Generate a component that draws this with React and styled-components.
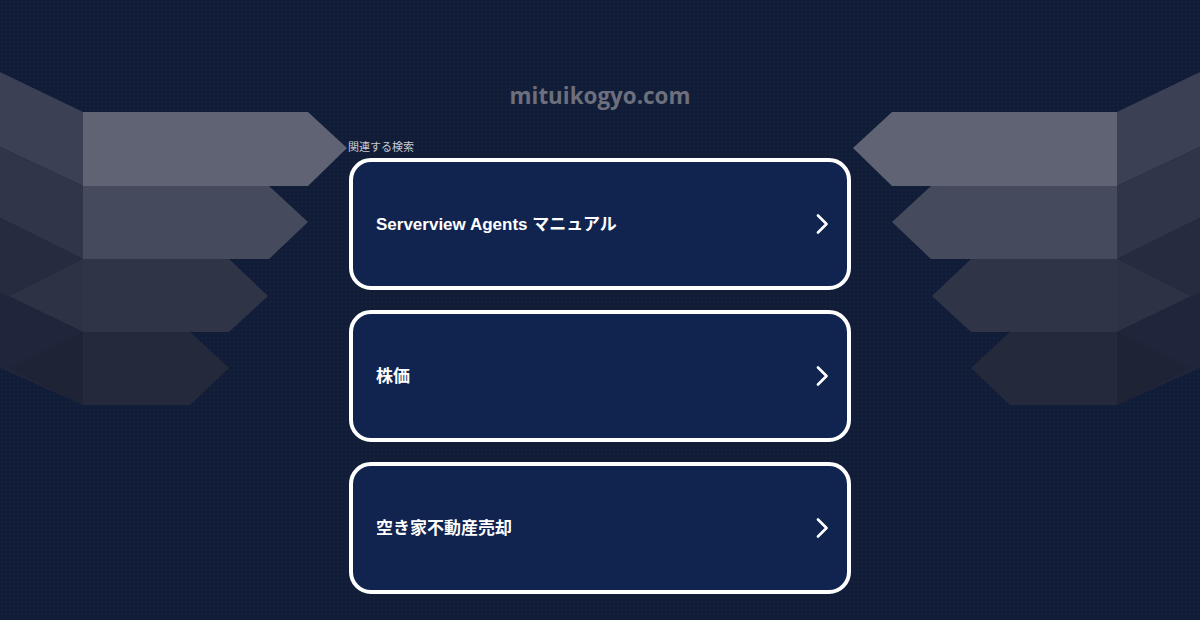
import styled, { createGlobalStyle } from "styled-components";

const GlobalStyle = createGlobalStyle`
  html, body {
    margin: 0;
    padding: 0;
    background: #111c37;
  }
  * {
    box-sizing: border-box;
  }
`;

const Page = styled.div`
  width: 100%;
  height: 620px;
  overflow: hidden;
  display: grid;
  grid-template-columns: 1fr 502px 1fr;
  background-color: #111c37;
  background-image: radial-gradient(rgba(40, 60, 110, 0.25) 0.6px, transparent 0.8px);
  background-size: 4px 4px;
  font-family: "Liberation Sans", "Noto Sans CJK JP", sans-serif;
`;

const Side = styled.div`
  height: 620px;
  svg {
    display: block;
    width: 100%;
    height: 100%;
    transform: ${(p) => (p.$flip ? "scaleX(-1)" : "none")};
  }
`;

const Center = styled.main`
  display: flex;
  flex-direction: column;
  padding-top: 80px;
`;

const Domain = styled.h1`
  margin: 0;
  text-align: center;
  font-family: "Open Sans", "Noto Sans", sans-serif;
  font-weight: 700;
  font-size: 22.4px;
  line-height: 32px;
  color: #6d707c;
`;

const Related = styled.div`
  margin-top: 26px;
  margin-left: -1px;
  font-family: "Noto Sans CJK JP", sans-serif;
  font-size: 11px;
  line-height: 16px;
  color: #c9cbd2;
`;

const List = styled.div`
  display: flex;
  flex-direction: column;
  gap: 20px;
  margin-top: 4px;
`;

const Card = styled.a`
  display: flex;
  align-items: center;
  justify-content: space-between;
  height: 132px;
  padding: 0 19px 0 23px;
  border: 4px solid #ffffff;
  border-radius: 22px;
  background: #10244f;
  color: #ffffff;
  text-decoration: none;
  font-weight: 700;
  font-size: 17px;
  cursor: pointer;
`;

const Label = styled.span`
  line-height: 20px;
  padding-top: 1px;
`;

const Chevron = () => (
  <svg width="12" height="20" viewBox="0 0 12 20">
    <polyline
      points="2,1.5 10.5,10 2,18.5"
      fill="none"
      stroke="#ffffff"
      strokeWidth="2.6"
      strokeLinecap="round"
      strokeLinejoin="round"
    />
  </svg>
);

// the stacked arrow art on both sides
const Arrows = () => (
  <svg viewBox="0 0 349 620" preserveAspectRatio="xMinYMin slice">
    <polygon points="0,72 83,112 83,186 0,147" fill="#3b4054" />
    <polygon points="0,147 83,186 83,259 0,218" fill="#30354a" />
    <polygon points="0,218 83,259 83,332 0,293" fill="#272b40" />
    <polygon points="83,259 10,296 83,332" fill="#2d3245" />
    <polygon points="0,293 83,332 83,405 0,368" fill="#20253b" />
    <polygon points="83,332 10,368 83,405" fill="#1f2336" />
    <polygon points="83,112 308,112 347,148 308,186 83,186" fill="#5f6373" />
    <polygon points="83,186 269,186 308,222 269,259 83,259" fill="#454b5c" />
    <polygon points="83,259 229,259 268,296 229,332 83,332" fill="#2f3446" />
    <polygon points="83,332 190,332 229,368 190,405 83,405" fill="#25293c" />
  </svg>
);

const items = ["Serverview Agents マニュアル", "株価", "空き家不動産売却"];

function App() {
  return (
    <>
      <GlobalStyle />
      <Page>
        <Side>
          <Arrows />
        </Side>
        <Center>
          <Domain>mituikogyo.com</Domain>
          <Related>関連する検索</Related>
          <List>
            {items.map((label) => (
              <Card key={label}>
                <Label>{label}</Label>
                <Chevron />
              </Card>
            ))}
          </List>
        </Center>
        <Side $flip>
          <Arrows />
        </Side>
      </Page>
    </>
  );
}

export default App;
